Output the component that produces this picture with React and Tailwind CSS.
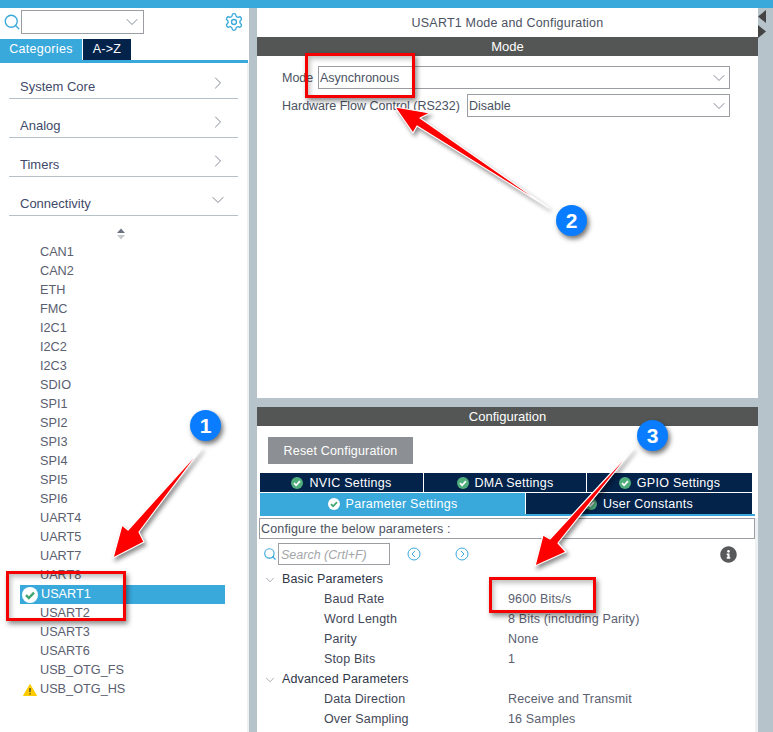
import { ChevronDown, ChevronRight, Search, Settings } from "lucide-react"
import { FaInfoCircle } from "react-icons/fa"

const categories = ["System Core", "Analog", "Timers"]
const peripherals = ["CAN1", "CAN2", "ETH", "FMC", "I2C1", "I2C2", "I2C3", "SDIO", "SPI1", "SPI2", "SPI3", "SPI4", "SPI5", "SPI6", "UART4", "UART5", "UART7", "UART8"]
const peripherals2 = ["USART2", "USART3", "USART6", "USB_OTG_FS"]
const basicParams = [
  ["Baud Rate", "9600 Bits/s"],
  ["Word Length", "8 Bits (including Parity)"],
  ["Parity", "None"],
  ["Stop Bits", "1"],
]
const advancedParams = [
  ["Data Direction", "Receive and Transmit"],
  ["Over Sampling", "16 Samples"],
]

const CheckDot = ({ size = 12, bg = "#ffffff", fg = "#3fa66f" }) => (
  <svg width={size} height={size} viewBox="0 0 16 16" className="shrink-0">
    <circle cx="8" cy="8" r="8" fill={bg} />
    <path d="M4 8.2l2.8 2.8L12 5.6" fill="none" stroke={fg} strokeWidth="2.4" />
  </svg>
)

const TabCheck = () => (
  <svg width="12" height="12" viewBox="0 0 16 16" className="shrink-0">
    <circle cx="8" cy="8" r="8" fill="#4fae7c" />
    <path d="M4 8.2l2.8 2.8L12 5.6" fill="none" stroke="#ffffff" strokeWidth="2.4" />
  </svg>
)

const Arrow = ({ points }) => (
  <polygon points={points} fill="#ff0000" stroke="#ffffff" strokeWidth="1.2" strokeLinejoin="round" style={{ filter: "drop-shadow(2px 3px 2px rgba(0,0,0,0.45))" }} />
)

const Badge = ({ n, className }) => (
  <div className={`absolute w-[31px] h-[31px] rounded-full bg-[#0a7cff] text-white font-bold text-[21px] flex items-center justify-center shadow-[2px_3px_5px_rgba(0,0,0,0.55)] ${className}`}>
    {n}
  </div>
)

const RedBox = ({ className }) => (
  <div className={`absolute border-[3px] border-[#f50000] shadow-[2px_3px_5px_rgba(0,0,0,0.45),inset_2px_3px_5px_rgba(0,0,0,0.25)] ${className}`} />
)

const ParamRow = ({ label, value }) => (
  <div className="flex h-5 items-center pt-px tracking-[0.15px]">
    <span className="w-[249px] pl-[65px] text-[#3f4656]">{label}</span>
    <span className="text-[#5a6070]">{value}</span>
  </div>
)

const GroupRow = ({ label }) => (
  <div className="flex h-5 items-center pt-px text-[#2f3647] tracking-[0.15px]">
    <ChevronDown size={14} strokeWidth={1} className="ml-[4px] mr-[5px] text-[#6b7280]" />
    <span>{label}</span>
  </div>
)

const Sidebar = () => (
  <aside className="w-[249px] shrink-0 flex flex-col bg-white">
    <div className="flex h-[31px] items-center pl-[3px] pr-[5px] pb-[3px]">
      <Search size={18} strokeWidth={1.8} className="text-[#39a9dc] shrink-0" />
      <div className="w-[123px] h-6 border border-[#9a9ea3] flex items-center justify-end pr-px">
        <ChevronDown size={20} strokeWidth={1} className="text-[#6b7280]" />
      </div>
      <Settings size={20} strokeWidth={1.6} className="ml-auto text-[#39a9dc]" />
    </div>
    <div className="flex h-[21px] text-white tracking-[0.3px]">
      <div className="w-[82px] bg-[#39a9dc] flex items-center justify-center">Categories</div>
      <div className="w-[48px] ml-px bg-[#03234b] flex items-center justify-center">{"A->Z"}</div>
    </div>
    <div className="h-[3px] w-[248px] bg-[#39a9dc]" />
    <div className="flex-1 border-r-2 border-[#eef1f3] relative">
      <div className="px-[9px] -mt-[3px] text-[13px]">
        {categories.map((c) => (
          <div key={c} className="h-[39px] border-b border-[#b6c0c8] flex items-end justify-between pl-[11px] pr-[10px] pb-[5px] text-[#3f4a6a]">
            <span>{c}</span>
            <ChevronRight size={20} strokeWidth={1} className="text-[#6b7280]" />
          </div>
        ))}
        <div className="h-[39px] border-b border-[#b6c0c8] flex items-end justify-between pl-[11px] pr-[10px] pb-[5px] text-[#3f4a6a]">
          <span>Connectivity</span>
          <ChevronDown size={20} strokeWidth={1} className="text-[#6b7280]" />
        </div>
      </div>
      <div className="flex flex-col items-center w-[242px] mt-[12px] h-[14px]">
        <svg width="10" height="12" viewBox="0 0 10 12">
          <path d="M5 0.5L9 5H1z" fill="#6b7280" />
          <path d="M5 11.5L9 7H1z" fill="#c6c9cc" />
        </svg>
      </div>
      <div className="pl-[20px] pt-px w-[225px] text-[#5a6070] box-content text-[12.7px]">
        {peripherals.map((p) => (
          <div key={p} className="h-[19px] flex items-center pl-[20px]">{p}</div>
        ))}
        <div className="h-[19px] flex items-center bg-[#39a9dc] text-white w-[205px]">
          <span className="w-[20px] flex justify-center"><CheckDot size={16} /></span>
          <span className="ml-px">USART1</span>
        </div>
        {peripherals2.map((p) => (
          <div key={p} className="h-[19px] flex items-center pl-[20px]">{p}</div>
        ))}
        <div className="h-[19px] flex items-center">
          <span className="w-[20px] flex justify-center">
            <svg width="14" height="12" viewBox="0 0 14 12">
              <path d="M7 0.5L13.5 11.5H0.5z" fill="#ffcc00" stroke="#ffcc00" strokeLinejoin="round" />
              <path d="M7 4v4M7 9.2v1.4" stroke="#333333" strokeWidth="1.2" />
            </svg>
          </span>
          <span>USB_OTG_HS</span>
        </div>
      </div>
    </div>
  </aside>
)

const ModePanel = () => (
  <section className="h-[390px] bg-white">
    <div className="h-[29px] pt-px flex items-center justify-center text-[#4b5262] tracking-[0.2px]">USART1 Mode and Configuration</div>
    <div className="h-[19px] bg-[#535654] text-white text-[13px] flex items-center justify-center">Mode</div>
    <div className="pl-[25px] pt-[10px] flex flex-col gap-[5px] text-[#4b5262]">
      <div className="flex h-[23px] items-center">
        <span className="w-[36px] pt-px">Mode</span>
        <div className="w-[412px] h-[23px] border border-[#9a9ea3] flex items-center justify-between pl-[1px]">
          <span className="pt-px">Asynchronous</span>
          <ChevronDown size={20} strokeWidth={1} className="text-[#6b7280]" />
        </div>
      </div>
      <div className="flex h-[23px] items-center">
        <span className="w-[185px] pt-px whitespace-nowrap">Hardware Flow Control (RS232)</span>
        <div className="w-[263px] h-[23px] border border-[#9a9ea3] flex items-center justify-between pl-[1px]">
          <span className="pt-px">Disable</span>
          <ChevronDown size={20} strokeWidth={1} className="text-[#6b7280]" />
        </div>
      </div>
    </div>
  </section>
)

const ConfigPanel = () => (
  <section className="flex-1 bg-white overflow-hidden">
    <div className="h-[19px] bg-[#535654] text-white text-[13px] flex items-center justify-center">Configuration</div>
    <div className="pl-[11px] pt-[11px]">
      <div className="w-[145px] h-[27px] pt-px bg-[#8c8f93] text-white tracking-[0.18px] flex items-center justify-center">Reset Configuration</div>
    </div>
    <div className="pl-[3px] pr-[6px] pt-[9px] text-white tracking-[0.27px]">
      <div className="flex h-[19px] gap-px">
        <div className="w-[163px] pt-px bg-[#03234b] flex items-center justify-center gap-[6px]"><TabCheck />NVIC Settings</div>
        <div className="w-[162px] pt-px bg-[#03234b] flex items-center justify-center gap-[6px]"><TabCheck />DMA Settings</div>
        <div className="flex-1 pt-px bg-[#03234b] flex items-center justify-center gap-[6px]"><TabCheck />GPIO Settings</div>
      </div>
      <div className="flex h-[21px] gap-px mt-px">
        <div className="w-[265px] pt-px bg-[#39a9dc] flex items-center justify-center gap-[6px]"><CheckDot />Parameter Settings</div>
        <div className="flex-1 pt-px bg-[#03234b] flex items-center justify-center gap-[6px]"><TabCheck />User Constants</div>
      </div>
      <div className="h-[2px] bg-[#39a9dc] -mr-[3px]" />
    </div>
    <div className="border-r-[3px] border-[#eef1f3] h-full pl-[2px] pr-0">
      <div className="mt-[2px] h-[21px] pt-px border border-[#9a9ea3] flex items-center pl-px text-[#4b5262] tracking-[0.15px]">Configure the below parameters :</div>
      <div className="flex items-center h-[22px] mt-[4px] pl-[4px]">
        <Search size={14} strokeWidth={2} className="text-[#39a9dc] shrink-0" />
        <div className="ml-px w-[112px] h-[22px] border border-[#9a9ea3] flex items-center pl-[2px] pt-[2px] italic text-[#a3a6aa]">Search (Crtl+F)</div>
        <svg width="14" height="14" viewBox="0 0 14 14" className="ml-[17px]">
          <circle cx="7" cy="7" r="6" fill="none" stroke="#39a9dc" />
          <path d="M8 4L5 7l3 3" fill="none" stroke="#39a9dc" />
        </svg>
        <svg width="14" height="14" viewBox="0 0 14 14" className="ml-[34px]">
          <circle cx="7" cy="7" r="6" fill="none" stroke="#39a9dc" />
          <path d="M6 4l3 3-3 3" fill="none" stroke="#39a9dc" />
        </svg>
        <FaInfoCircle size={17} className="ml-[251px] text-[#58595b]" />
      </div>
      <div className="mt-[4px]">
        <GroupRow label="Basic Parameters" />
        {basicParams.map(([l, v]) => <ParamRow key={l} label={l} value={v} />)}
        <GroupRow label="Advanced Parameters" />
        {advancedParams.map(([l, v]) => <ParamRow key={l} label={l} value={v} />)}
      </div>
    </div>
  </section>
)

export default function App() {
  return (
    <div className="relative w-[773px] h-[732px] overflow-hidden bg-[#b7c3ca] font-['Liberation_Sans',Arial,sans-serif] text-[12.5px] leading-none">
      <div className="h-2 bg-[#39a9dc]" />
      <div className="flex h-[724px]">
        <Sidebar />
        <div className="w-[8px] shrink-0" />
        <main className="w-[501px] flex flex-col gap-[9px]">
          <ModePanel />
          <ConfigPanel />
        </main>
        <div className="flex-1 pt-[2px]">
          <svg width="8" height="28" viewBox="0 0 8 28">
            <path d="M8 0v13L0 6.5z" fill="#444444" />
            <path d="M0 15v13l8-6.5z" fill="#444444" />
          </svg>
        </div>
      </div>

      {/* annotations drawn on top of the screenshot */}
      <svg className="absolute inset-0" width="773" height="732" viewBox="0 0 773 732">
        <Arrow points="202,448 139,532 144,542 113,558 122,525 128,530" />
        <Arrow points="549,208 420,118 430,113 395,107 413,133 417,126" />
        <Arrow points="634,448 558,543 566,552 535,566 543,535 550,539" />
      </svg>
      <RedBox className="left-[6px] top-[571px] w-[120px] h-[50px]" />
      <RedBox className="left-[305px] top-[53px] w-[110px] h-[45px]" />
      <RedBox className="left-[489px] top-[577px] w-[107px] h-[36px]" />
      <Badge n="1" className="left-[190px] top-[410px]" />
      <Badge n="2" className="left-[556px] top-[205px]" />
      <Badge n="3" className="left-[637px] top-[420px]" />
    </div>
  )
}
